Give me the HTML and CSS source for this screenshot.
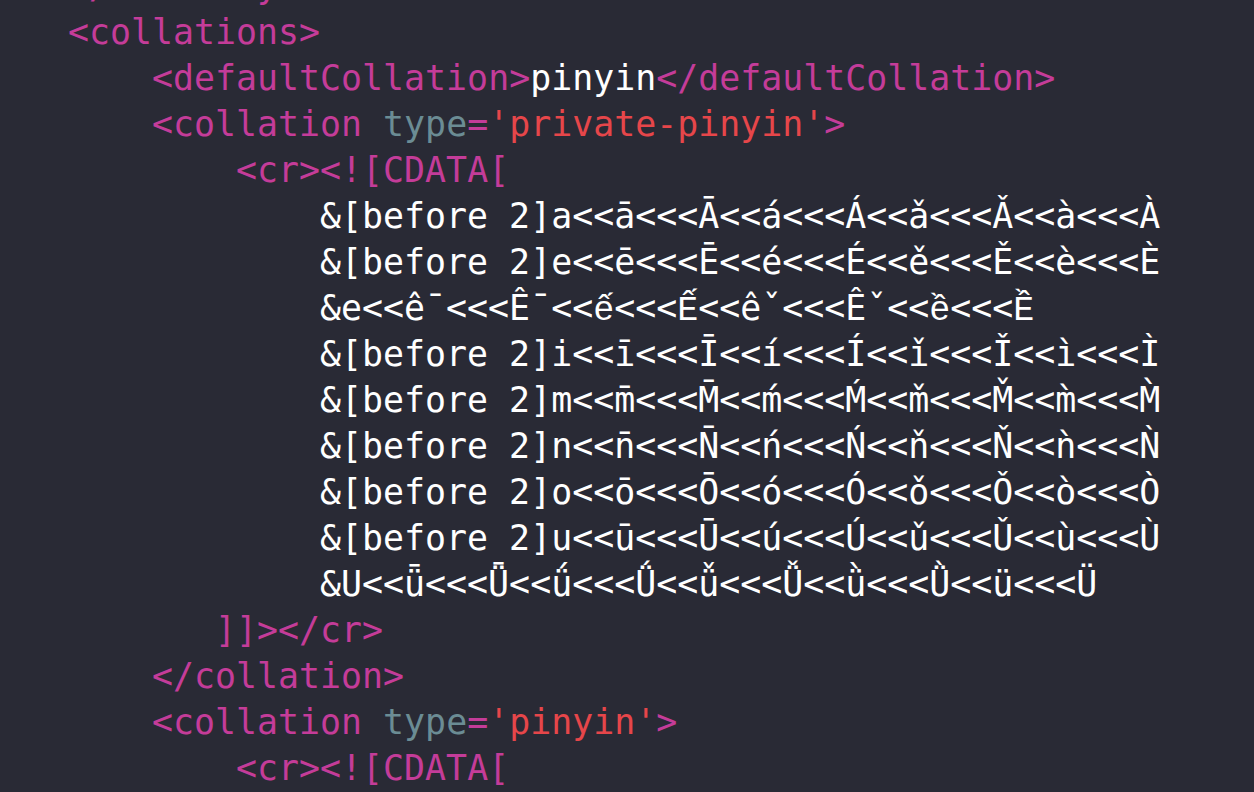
FILE: index.html
```html
<!DOCTYPE html>
<html>
<head>
<meta charset="utf-8">
<link rel="stylesheet" href="styles.css">
</head>
<body>
<div class="editor">
<div class="code">
<div class="ln"><span class="t">&lt;/identity&gt;</span></div>
<div class="ln"><span class="t">&lt;collations&gt;</span></div>
<div class="ln">    <span class="t">&lt;defaultCollation&gt;</span><span class="w">pinyin</span><span class="t">&lt;/defaultCollation&gt;</span></div>
<div class="ln">    <span class="t">&lt;collation </span><span class="a">type</span><span class="t">=</span><span class="s">'private-pinyin'</span><span class="t">&gt;</span></div>
<div class="ln">        <span class="t">&lt;cr&gt;&lt;![CDATA[</span></div>
<div class="ln w">            &amp;[before 2]a&lt;&lt;ā&lt;&lt;&lt;Ā&lt;&lt;á&lt;&lt;&lt;Á&lt;&lt;ǎ&lt;&lt;&lt;Ǎ&lt;&lt;à&lt;&lt;&lt;À</div>
<div class="ln w">            &amp;[before 2]e&lt;&lt;ē&lt;&lt;&lt;Ē&lt;&lt;é&lt;&lt;&lt;É&lt;&lt;ě&lt;&lt;&lt;Ě&lt;&lt;è&lt;&lt;&lt;È</div>
<div class="ln w">            &amp;e&lt;&lt;ê¯&lt;&lt;&lt;Ê¯&lt;&lt;<span class="vi">ế</span>&lt;&lt;&lt;<span class="vi">Ế</span>&lt;&lt;êˇ&lt;&lt;&lt;Êˇ&lt;&lt;<span class="vi">ề</span>&lt;&lt;&lt;<span class="vi">Ề</span></div>
<div class="ln w">            &amp;[before 2]i&lt;&lt;ī&lt;&lt;&lt;Ī&lt;&lt;í&lt;&lt;&lt;Í&lt;&lt;ǐ&lt;&lt;&lt;Ǐ&lt;&lt;ì&lt;&lt;&lt;Ì</div>
<div class="ln w">            &amp;[before 2]m&lt;&lt;m̄&lt;&lt;&lt;M̄&lt;&lt;ḿ&lt;&lt;&lt;Ḿ&lt;&lt;m̌&lt;&lt;&lt;M̌&lt;&lt;m̀&lt;&lt;&lt;M̀</div>
<div class="ln w">            &amp;[before 2]n&lt;&lt;n̄&lt;&lt;&lt;N̄&lt;&lt;ń&lt;&lt;&lt;Ń&lt;&lt;ň&lt;&lt;&lt;Ň&lt;&lt;ǹ&lt;&lt;&lt;Ǹ</div>
<div class="ln w">            &amp;[before 2]o&lt;&lt;ō&lt;&lt;&lt;Ō&lt;&lt;ó&lt;&lt;&lt;Ó&lt;&lt;ǒ&lt;&lt;&lt;Ǒ&lt;&lt;ò&lt;&lt;&lt;Ò</div>
<div class="ln w">            &amp;[before 2]u&lt;&lt;ū&lt;&lt;&lt;Ū&lt;&lt;ú&lt;&lt;&lt;Ú&lt;&lt;ǔ&lt;&lt;&lt;Ǔ&lt;&lt;ù&lt;&lt;&lt;Ù</div>
<div class="ln w">            &amp;U&lt;&lt;ǖ&lt;&lt;&lt;Ǖ&lt;&lt;ǘ&lt;&lt;&lt;Ǘ&lt;&lt;ǚ&lt;&lt;&lt;Ǚ&lt;&lt;ǜ&lt;&lt;&lt;Ǜ&lt;&lt;ü&lt;&lt;&lt;Ü</div>
<div class="ln">       <span class="t">]]&gt;&lt;/cr&gt;</span></div>
<div class="ln">    <span class="t">&lt;/collation&gt;</span></div>
<div class="ln">    <span class="t">&lt;collation </span><span class="a">type</span><span class="t">=</span><span class="s">'pinyin'</span><span class="t">&gt;</span></div>
<div class="ln">        <span class="t">&lt;cr&gt;&lt;![CDATA[</span></div>
<div class="ln w">            &amp;[before 2]a&lt;&lt;ā&lt;&lt;&lt;Ā&lt;&lt;á&lt;&lt;&lt;Á&lt;&lt;ǎ&lt;&lt;&lt;Ǎ&lt;&lt;à&lt;&lt;&lt;À</div>
</div>
</div>
</body>
</html>
```

FILE: styles.css
```css
html, body {
  margin: 0;
  padding: 0;
  background: #292a35;
  overflow: hidden;
}

.editor {
  width: 1254px;
  height: 792px;
  overflow: hidden;
  background: #292a35;
}

.code {
  margin: -37px 0 0 0;
  padding: 0 0 0 68px;
  font-family: "DejaVu Sans Mono", "Liberation Mono", monospace;
  font-size: 34.9px;
  line-height: 46px;
  color: #ffffff;
}

.ln {
  white-space: pre;
  height: 46px;
}

.vi {
  font-family: "Liberation Mono", "DejaVu Sans Mono", monospace;
  font-size: 35px;
}

.t { color: #c43c99; }
.a { color: #6b8c94; }
.s { color: #e6464a; }
.w { color: #ffffff; }
```
